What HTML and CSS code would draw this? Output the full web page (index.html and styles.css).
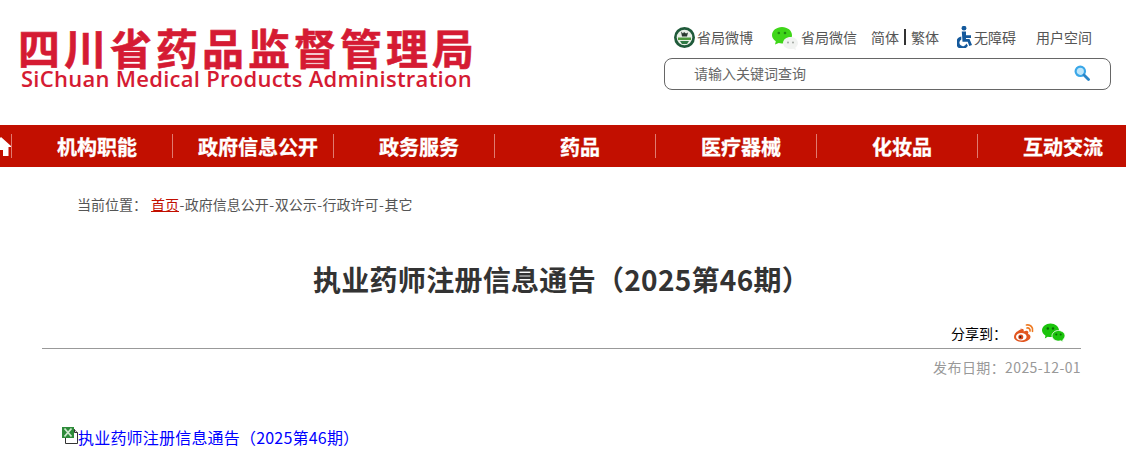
FILE: index.html
```html
<!DOCTYPE html>
<html lang="zh-CN">
<head>
  <meta charset="UTF-8" />
  <title>执业药师注册信息通告（2025第46期）</title>
  <link rel="stylesheet" href="styles.css">
</head>
<body>
  <header class="top">
    <div class="logo">
      <div class="logo-cn">四川省药品监督管理局</div>
      <div class="logo-en">SiChuan Medical Products Administration</div>
    </div>
    <div class="top-right">
      <div class="links">
        <a class="link link-weibo" href="#">
          <svg width="21" height="21" viewBox="0 0 21 21"><circle cx="10.5" cy="10.5" r="10.5" fill="#1f5a3a"/><circle cx="10.5" cy="10.5" r="7.8" fill="#e8efe6"/><path d="M7 4.500l2 2 1-1.500 2 1.500 2-1-1 4h-5z" fill="#2b3a30"/><rect x="4" y="10.500" width="13" height="2.500" fill="#4d9a3c"/><path d="M6 14h9l-2 3h-5z" fill="#2f7a45"/></svg>
          <span>省局微博</span>
        </a>
        <a class="link link-wechat" href="#">
          <svg class="wechat-icon" width="26" height="23" viewBox="0 0 26 23"><path d="M10 0c5.500 0 10 3.600 10 8.200s-4.500 8.200-10 8.200c-1.200 0-2.300-.2-3.300-.5L3 17.500l.8-3.300C1.500 12.700 0 10.600 0 8.200 0 3.600 4.500 0 10 0z" fill="#3fd619"/><circle cx="6.800" cy="6" r="1.300" fill="#1f8a10"/><circle cx="13" cy="6" r="1.300" fill="#1f8a10"/><path d="M18.500 10c4 0 7.500 2.600 7.500 6 0 1.900-1 3.500-2.600 4.600l.5 2.400-2.800-1.300c-.8.200-1.700.3-2.600.3-4 0-7.500-2.600-7.500-6s3.500-6 7.500-6z" fill="#f1f3f1"/><circle cx="16" cy="15.500" r=".9" fill="#9aa09a"/><circle cx="21" cy="15.500" r=".9" fill="#9aa09a"/></svg>
          <span>省局微信</span>
        </a>
        <span class="lang"><a href="#">简体</a><i class="lang-bar"></i><a href="#">繁体</a></span>
        <a class="link link-access" href="#">
          <svg width="16" height="22" viewBox="0 0 16 22"><circle cx="7" cy="2.200" r="2.400" fill="#14599c"/><path d="M4.800 5.500h4.200v3.800h5v2.700H9v1h3.500l2.500 6-2.700 1-1.600-4.300H5.500z" fill="#14599c"/><path d="M4.300 10.500v3a3.500 3.500 0 1 0 5 4l1.600 2.200A6.300 6.300 0 1 1 4.300 10.500z" fill="#14599c"/></svg>
          <span>无障碍</span>
        </a>
        <a class="link link-user" href="#">用户空间</a>
      </div>
      <div class="search">
        <span class="search-hint">请输入关键词查询</span>
        <svg width="16" height="16" viewBox="0 0 16 16"><circle cx="6.300" cy="6.300" r="4.700" fill="#bfe6fa" stroke="#3aa7e8" stroke-width="2.200"/><path d="M10 10l4.500 4.500" stroke="#2a86c8" stroke-width="2.800" stroke-linecap="round"/></svg>
      </div>
    </div>
  </header>

  <nav class="nav">
    <a class="nav-home" href="#">
      <svg width="24" height="20" viewBox="0 0 24 20"><path d="M12 1L1 11h3.500v9h5.500v-6h4v6h5.500v-9H23z" fill="#fff"/></svg>
    </a>
    <a class="nav-item" href="#">机构职能</a>
    <a class="nav-item" href="#">政府信息公开</a>
    <a class="nav-item" href="#">政务服务</a>
    <a class="nav-item" href="#">药品</a>
    <a class="nav-item" href="#">医疗器械</a>
    <a class="nav-item" href="#">化妆品</a>
    <a class="nav-item" href="#">互动交流</a>
  </nav>

  <div class="crumb">
    <span class="crumb-label">当前位置：</span><a class="crumb-home" href="#">首页</a><span class="sep">-</span>政府信息公开<span class="sep">-</span>双公示<span class="sep">-</span>行政许可<span class="sep">-</span>其它
  </div>

  <main class="article">
    <h1 class="title">执业药师注册信息通告（2025第46期）</h1>
    <div class="share">
      <span>分享到：</span>
      <svg class="share-weibo" width="22" height="20" viewBox="0 0 22 19"><path d="M9 5.500c-4 1-8 4.600-8 8 0 3 3.800 5 8 5 5 0 8.500-2.800 8.500-5.300 0-1.800-1.600-2.500-2.500-2.800.6-1.400.5-2.600-.6-3-1-.4-2.700 0-3.700.5.300-1.500-.1-3-3.700-2.400z" fill="#e2561f"/><ellipse cx="8.300" cy="13.300" rx="5.300" ry="3.800" fill="#fff"/><circle cx="7.800" cy="13.500" r="2.500" fill="#d9481a"/><circle cx="7.300" cy="13.500" r="1" fill="#2b2320"/><path d="M13.500 1.500c3.800-.8 7 2.500 6 6.300M14 4.500c1.900-.4 3.400 1.200 3 3" fill="none" stroke="#ee7a22" stroke-width="1.700" stroke-linecap="round"/></svg>
      <svg width="23" height="20" viewBox="0 0 23 19"><path d="M8.500 0C13 0 17 3 17 6.800c0 3.800-4 6.800-8.500 6.800-1 0-1.900-.1-2.800-.4L2.800 15l.7-2.800C1.400 11 0 9 0 6.800 0 3 4 0 8.500 0z" fill="#1bc40c"/><circle cx="5.800" cy="5" r="1.200" fill="#0b6a04"/><circle cx="11" cy="5" r="1.200" fill="#0b6a04"/><path d="M16.500 7c3.500 0 6.500 2.400 6.500 5.300 0 1.700-.9 3.100-2.300 4.100l.5 2.100-2.400-1.200c-.7.200-1.500.3-2.300.3-3.500 0-6.500-2.400-6.500-5.300S13 7 16.500 7z" fill="#1bc40c" stroke="#fff" stroke-width=".8"/><circle cx="14.300" cy="11" r="1" fill="#0b6a04"/><circle cx="18.700" cy="11" r="1" fill="#0b6a04"/></svg>
    </div>
    <div class="date">发布日期：2025-12-01</div>
    <div class="attach">
      <svg width="16" height="17" viewBox="0 0 16 17"><path d="M3.500 2.500h9l3 3v11h-12z" fill="#fff" stroke="#333"/><path d="M12.500 2.500v3h3" fill="#ddd" stroke="#333"/><rect x="0" y="0" width="12" height="11" fill="#2e8b3a"/><path d="M2.500 1.500l7 8M9.500 1.500l-7 8" stroke="#cfe8cf" stroke-width="1.800"/></svg><a href="#">执业药师注册信息通告（2025第46期）</a>
    </div>
  </main>
</body>
</html>
```

FILE: styles.css
```css
html, body { margin: 0; padding: 0; }
body { font-family: "Noto Sans CJK SC", "Noto Sans", sans-serif; background: #fff; color: #555; overflow: hidden; }
a { color: inherit; text-decoration: none; }

.top { display: flex; justify-content: space-between; height: 125px; padding: 0 15px 0 20px; box-sizing: border-box; }
.logo { padding-top: 26px; color: #d51b33; }
.logo-cn { font-size: 42px; line-height: 42px; font-weight: 700; letter-spacing: 4px; white-space: nowrap; margin-left: -2px; -webkit-text-stroke: 0.6px #d51b33; }
.logo-en { font-family: "Open Sans", sans-serif; font-size: 22px; line-height: 20px; font-weight: 600; letter-spacing: 0.27px; white-space: nowrap; margin-left: 1px; }

.top-right { width: 447px; padding-top: 26px; }
.links { display: flex; align-items: center; height: 22px; font-size: 14px; line-height: 22px; color: #555; margin-bottom: 10px; white-space: nowrap; }
.link { display: flex; align-items: center; }
.link-weibo { margin-left: 10px; gap: 2px; }
.link-wechat { margin-left: 19px; gap: 3px; }
.wechat-icon { margin-top: 2px; }
.lang { display: flex; align-items: center; margin-left: 14px; }
.lang-bar { display: block; width: 2px; height: 16px; background: #333; margin: 0 5px; }
.link-access { margin-left: 18px; gap: 1px; }
.link-user { margin-left: 20px; }

.search { display: flex; align-items: center; justify-content: space-between; height: 32px; box-sizing: border-box; border: 1px solid #666; border-radius: 8px; padding: 0 20px 2px 29px; font-size: 14px; color: #666; }

.nav { display: flex; height: 42px; background: #c20f00; color: #fff; font-size: 20px; font-weight: 700; line-height: 44px; }
.nav-home { display: flex; align-items: center; width: 11px; flex: none; overflow: hidden; border-right: 1px solid #e07a70; height: 24px; margin-top: 9px; position: relative; }
.nav-home svg { flex: none; margin-left: -11px; }
.nav-item { flex: none; width: 152px; padding-left: 9px; text-align: center; position: relative; white-space: nowrap; -webkit-text-stroke: 0.3px #fff; }
.nav-item::after { content: ""; position: absolute; right: 0; top: 9px; height: 24px; width: 1px; background: #e07a70; }
.nav-item:last-child::after { display: none; }

.crumb { padding: 27px 0 0 77px; font-size: 14px; line-height: 20px; color: #555; }
.crumb-label { margin-right: 4px; }
.crumb-home { color: #c20f00; text-decoration: underline; }
.sep { padding: 0 0.5px; }

.article { padding: 0 45px 0 42px; }
.title { margin: 45px 0 0; font-size: 28px; line-height: 40px; font-weight: 700; color: #333; text-align: center; letter-spacing: 0.3px; }
.share { display: flex; align-items: center; justify-content: flex-end; gap: 6px; height: 25px; margin-top: 21px; padding: 0 16px 3px 0; border-bottom: 1px solid #999; font-size: 14px; color: #000; }
.share-weibo { margin-right: 1px; }
.date { font-size: 14px; line-height: 20px; margin-top: 8px; color: #999; text-align: right; letter-spacing: 0.4px; }
.attach { display: flex; align-items: flex-start; margin: 50px 0 0 20px; font-size: 16px; line-height: 20px; letter-spacing: 0.2px; }
.attach a { color: #00f; }
```
